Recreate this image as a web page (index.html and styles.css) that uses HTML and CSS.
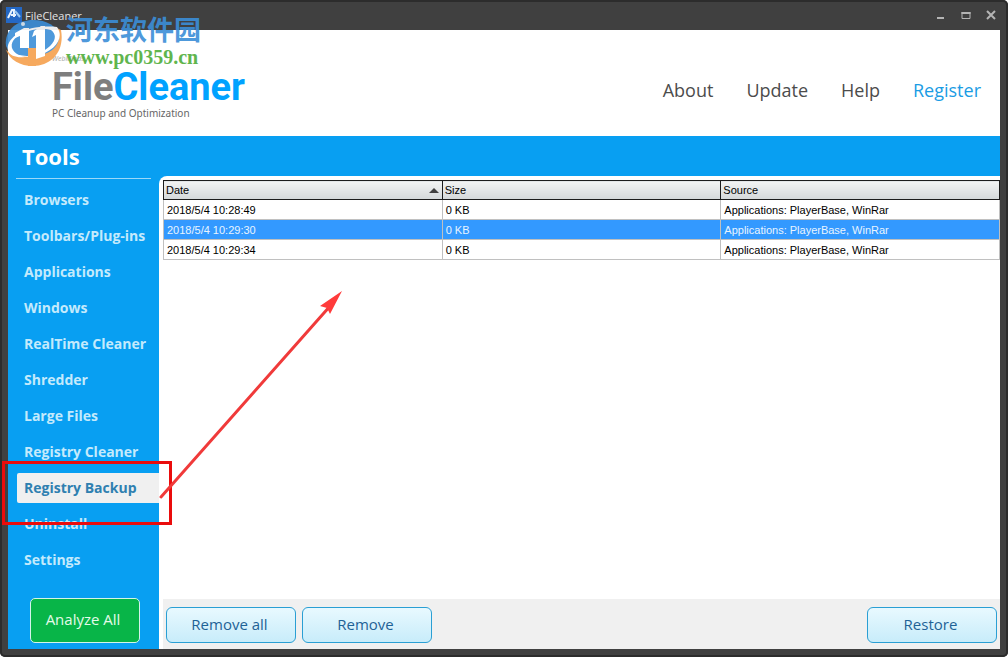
FILE: index.html
```
<!DOCTYPE html>
<html lang="en">

<head>
	<meta charset="utf-8">
	<title>FileCleaner</title>
	<link rel="stylesheet" href="styles.css">
</head>

<body>
	<div class="window">
		<div class="titlebar">
			<svg class="app-icon" viewBox="0 0 16 16">
				<rect width="16" height="16" fill="#2468c4" />
				<path d="M2 11 L6 3 L8 3 L8 10 M5 8 H10" fill="none" stroke="#e8f2fc" stroke-width="2" />
				<path d="M9 4 L14 10" stroke="#9cc8f0" stroke-width="2" />
			</svg>
			<span class="title">FileCleaner</span>
			<div class="controls">
				<button type="button" aria-label="Minimize"><svg viewBox="0 0 10 10"><path d="M1 8 H8" /></svg></button>
				<button type="button" aria-label="Maximize"><svg viewBox="0 0 10 10"><path d="M0.5 3 H9.5" /><path class="thin" d="M1 2 V8.5 H9 V2" /></svg></button>
				<button type="button" aria-label="Close"><svg viewBox="0 0 10 10"><path d="M1 1 L9 9 M9 1 L1 9" /></svg></button>
			</div>
		</div>

		<div class="header">
			<div class="logo">
				<div class="logo-brand">WebMinds</div>
				<div class="logo-name">File<span>Cleaner</span></div>
				<div class="logo-sub">PC Cleanup and Optimization</div>
			</div>
			<nav class="menu">
				<a href="#">About</a>
				<a href="#">Update</a>
				<a href="#">Help</a>
				<a href="#" class="register">Register</a>
			</nav>
		</div>

		<div class="main">
			<div class="sidebar">
				<h1>Tools</h1>
				<ul>
					<li><a href="#">Browsers</a></li>
					<li><a href="#">Toolbars/Plug-ins</a></li>
					<li><a href="#">Applications</a></li>
					<li><a href="#">Windows</a></li>
					<li><a href="#">RealTime Cleaner</a></li>
					<li><a href="#">Shredder</a></li>
					<li><a href="#">Large Files</a></li>
					<li><a href="#">Registry Cleaner</a></li>
					<li class="active">
						<a href="#">Registry Backup</a>
						<div class="marker"></div>
						<svg class="arrow" viewBox="0 0 184 210">
							<path d="M2 207 L172 15" stroke="#f03a3a" stroke-width="3" stroke-linecap="round" />
							<path d="M183 1 L161 16 L168 18 L171 24 Z" fill="#ff3b3b" />
						</svg>
					</li>
					<li><a href="#">Uninstall</a></li>
					<li><a href="#">Settings</a></li>
				</ul>
				<button type="button" class="analyze">Analyze All</button>
			</div>

			<div class="content">
				<table>
					<thead>
						<tr>
							<th class="sorted">Date</th>
							<th>Size</th>
							<th>Source</th>
						</tr>
					</thead>
					<tbody>
						<tr>
							<td>2018/5/4 10:28:49</td>
							<td>0 KB</td>
							<td>Applications: PlayerBase, WinRar</td>
						</tr>
						<tr class="selected">
							<td>2018/5/4 10:29:30</td>
							<td>0 KB</td>
							<td>Applications: PlayerBase, WinRar</td>
						</tr>
						<tr>
							<td>2018/5/4 10:29:34</td>
							<td>0 KB</td>
							<td>Applications: PlayerBase, WinRar</td>
						</tr>
					</tbody>
				</table>
				<div class="footer">
					<button type="button" class="button">Remove all</button>
					<button type="button" class="button">Remove</button>
					<button type="button" class="button restore">Restore</button>
				</div>
			</div>
		</div>

		<div class="watermark">
			<svg class="stamp" viewBox="0 0 58 58">
				<path d="M56 20 C60 42 46 56 28 56 C15 56 5 50 1 40 C20 54 46 46 52 18 Z" fill="#f6a04d" />
				<path d="M1 36 C-1 20 12 10 28 10 C42 10 52 16 54 26 C54 40 40 46 26 46 C14 46 4 44 1 36 Z" fill="#3b8ed8" />
				<path d="M3 41 C0 28 20 14 52 17 C60 28 50 42 30 46 C50 36 54 26 46 20 C28 16 4 26 7 38 C9 44 16 46 20 47 C12 48 5 46 3 41 Z" fill="#fff" />
				<path d="M10 23 L19 18 H24 V38 H15 V26 L10 28 Z" fill="#fff" />
				<path d="M29 21 L36 16 H40 V46 L31 49 V25 L27 27 Z" fill="#fff" />
				<path d="M23 38 H31 V56 H23 Z" fill="#f6a04d" />
				<circle cx="18" cy="14" r="2" fill="#dceaf6" />
			</svg>
			<div>
				<div class="site-name" lang="zh">河东软件园</div>
				<div class="site-url">www.pc0359.cn</div>
			</div>
		</div>
	</div>
</body>

</html>
```
FILE: styles.css
```
* {
	margin: 0;
	padding: 0;
	box-sizing: border-box;
}

body {
	background: #fff;
	font-family: "Open Sans", "Noto Sans", sans-serif;
}

button {
	font-family: inherit;
	cursor: pointer;
}

a {
	text-decoration: none;
}

.window {
	position: relative;
	display: flex;
	flex-direction: column;
	min-height: 100vh;
	padding: 0 8px 8px;
	background: #404040;
	border-radius: 5px;
	box-shadow: inset 0 0 0 2px #2c2c2c;
}

/* title bar */
.titlebar {
	display: flex;
	align-items: center;
	height: 30px;
}

.app-icon {
	width: 16px;
	height: 16px;
	margin-left: -2px;
}

.title {
	margin-left: 3px;
	font-size: 11px;
	color: #e4e4e4;
}

.controls {
	display: flex;
	gap: 15px;
	margin-left: auto;
	padding-right: 4px;
}

.controls button {
	width: 10px;
	height: 10px;
	border: none;
	background: transparent;
}

.controls svg {
	display: block;
	fill: none;
	stroke: #b4b4b4;
	stroke-width: 2;
}

.controls .thin {
	stroke-width: 1;
}

/* header */
.header {
	display: flex;
	justify-content: space-between;
	height: 106px;
	padding: 22px 19px 0 44px;
	background: #fff;
}

.logo-brand {
	font-size: 7px;
	font-style: italic;
	line-height: 14px;
	color: #a8a8a8;
}

.logo-name {
	font-family: Roboto, "Liberation Sans", sans-serif;
	font-size: 38px;
	font-weight: bold;
	line-height: 42px;
	color: #7e7e7e;
}

.logo-name span {
	color: #00a2ff;
}

.logo-sub {
	font-family: "Noto Sans", sans-serif;
	font-size: 10px;
	line-height: 10px;
	color: #666;
}

.menu {
	display: flex;
	gap: 33px;
	padding-top: 26px;
}

.menu a {
	font-size: 18px;
	line-height: 24px;
	color: #4c4c4c;
}

.menu .register {
	color: #1a9ce4;
}

/* main area */
.main {
	display: flex;
	flex: 1;
	background: #089ff2;
}

.sidebar {
	display: flex;
	flex-direction: column;
	width: 151px;
	padding: 0 0 6px 8px;
}

.sidebar h1 {
	height: 43px;
	margin-right: 8px;
	padding-left: 6px;
	border-bottom: 1px solid #9cd8f8;
	font-size: 22px;
	line-height: 40px;
	color: #fff;
}

.sidebar ul {
	display: flex;
	flex-direction: column;
	gap: 6px;
	padding: 6px 0 0 1px;
	list-style: none;
}

.sidebar li a {
	display: block;
	padding-left: 7px;
	font-size: 14px;
	font-weight: bold;
	line-height: 30px;
	white-space: nowrap;
	color: #c4eafc;
}

.sidebar .active {
	position: relative;
	z-index: 1;
}

.sidebar .active a {
	background: #f0f0f0;
	border-radius: 2px 0 0 2px;
	color: #2f80b0;
}

/* red frame and arrow over the selected item */
.marker {
	position: absolute;
	top: -12px;
	left: -15px;
	width: 170px;
	height: 64px;
	border: 3px solid #ea0c0c;
	pointer-events: none;
}

.arrow {
	position: absolute;
	left: 142px;
	bottom: 3px;
	width: 184px;
	height: 210px;
	pointer-events: none;
}

.analyze {
	width: 110px;
	height: 45px;
	margin: auto 0 0 14px;
	padding: 0 4px 4px 0;
	border: 1px solid #d4f4e8;
	border-radius: 5px;
	background: #08b548;
	font-size: 15px;
	color: #e4fbe8;
}

.content {
	display: flex;
	flex-direction: column;
	flex: 1;
	margin-top: 40px;
	padding: 4px 0 0 4px;
	background: #fff;
	border-top-left-radius: 8px;
}

/* backup list */
table {
	width: 100%;
	table-layout: fixed;
	border-collapse: collapse;
	font-family: "Liberation Sans", sans-serif;
	font-size: 11px;
	line-height: 18px;
	color: #000;
}

th {
	height: 19px;
	padding-left: 2px;
	border: 1px solid #1c1c1c;
	background: linear-gradient(#f2f3f3, #d4d8da);
	font-weight: normal;
	text-align: left;
}

td {
	height: 20px;
	padding-left: 3px;
	border: 1px solid #c0c0c0;
}

.sorted::after {
	content: "";
	float: right;
	margin: 7px 3px 0 0;
	border: 5px solid transparent;
	border-top: none;
	border-bottom-color: #404040;
}

.selected td {
	background: #3399ff;
	color: #e8f4ff;
}

/* bottom buttons */
.footer {
	display: flex;
	gap: 6px;
	margin-top: auto;
	padding: 8px 3px 6px;
	background: #f0f0f0;
}

.button {
	width: 130px;
	height: 36px;
	padding: 0 3px 2px 0;
	border: 1px solid #2a9fd4;
	border-radius: 6px;
	background: linear-gradient(#e8f9ff, #c8ecfa);
	font-size: 15px;
	color: #1f6296;
}

.restore {
	margin-left: auto;
}

/* site stamp */
.watermark {
	position: absolute;
	top: 10px;
	left: 5px;
	display: flex;
	gap: 3px;
	opacity: 0.9;
	pointer-events: none;
}

.stamp {
	width: 58px;
	height: 58px;
}

.site-name {
	font-family: "Noto Sans CJK SC", sans-serif;
	font-size: 27px;
	font-weight: bold;
	line-height: 38px;
	color: #3b8ed8;
}

.site-url {
	font-family: "Liberation Serif", serif;
	font-size: 20px;
	font-weight: bold;
	line-height: 18px;
	color: #4fae3a;
}
```
